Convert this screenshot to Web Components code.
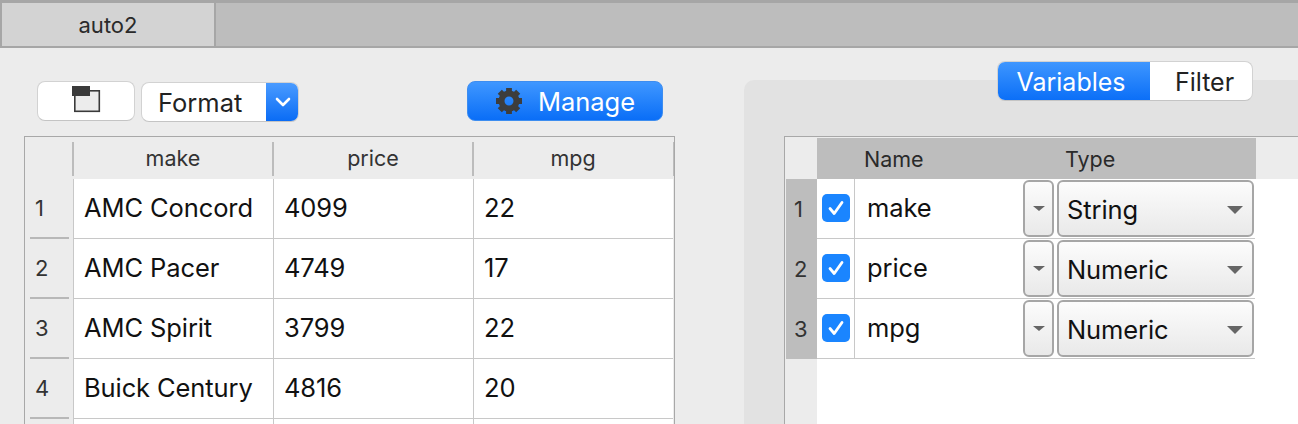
<!doctype html>
<html>
<head>
<meta charset="utf-8">
<style>
  html, body { margin: 0; height: 100%; overflow: hidden; background: #ececec; }
  body { font-family: Inter, "Liberation Sans", sans-serif; color: #1d1d1d; }
  .main { display: flex; height: 376px; overflow: hidden; }
</style>
</head>
<body>
<app-tabbar label="auto2"></app-tabbar>
<div class="main">
  <data-pane>
    <data-grid></data-grid>
  </data-pane>
  <var-pane>
    <var-row num="1" name="make" type="String"></var-row>
    <var-row num="2" name="price" type="Numeric"></var-row>
    <var-row num="3" name="mpg" type="Numeric"></var-row>
  </var-pane>
</div>
<script>
const define = (tag, html) => {
  customElements.define(tag, class extends HTMLElement {
    connectedCallback() {
      if (this.shadowRoot) return;
      const root = this.attachShadow({ mode: "open" });
      root.innerHTML = typeof html === "function" ? html(this) : html;
    }
  });
};

define("app-tabbar", el => `
<style>
  :host { display: flex; height: 48px; box-sizing: border-box; background: #bdbdbd;
    border-top: 3px solid #a6a6a6; border-bottom: 2px solid #a6a6a6; border-left: 2px solid #a6a6a6; }
  .tab { width: 214px; box-sizing: border-box; background: #d3d3d3; border-right: 2px solid #a6a6a6;
    display: flex; align-items: center; justify-content: center; font-size: 22px; color: #2a2a2a; }
</style>
<div class="tab">${el.getAttribute("label")}</div>`);

define("data-pane", `
<style>
  :host { display: block; width: 675px; flex: none; padding-left: 24px; box-sizing: border-box; }
  .bar { display: flex; height: 88px; box-sizing: border-box; padding: 33px 0 0 13px; align-items: flex-start; }
  .btn { box-sizing: border-box; height: 40px; border-radius: 8px; background: #fff;
    border: 1px solid #d2d2d2; border-bottom-color: #c4c4c4; }
  .layout { width: 98px; display: flex; justify-content: center; }
  .format { width: 158px; margin: 1px 0 0 6px; display: flex; overflow: hidden; font-size: 25.500px; color: #222; }
  .format span { flex: 1; padding-left: 16px; line-height: 40px; }
  .chev { width: 33px; margin-right: -1px; background: linear-gradient(#4a9bff, #0a6cf5); display: flex; align-items: center; justify-content: center; }
  .manage { width: 196px; margin-left: 168px; display: flex; align-items: center; justify-content: center; gap: 15px;
    background: linear-gradient(#3f97ff, #0a6ef7); border-color: #3d8df0; color: #fff; font-size: 25.500px; }
</style>
<div class="bar">
  <div class="btn layout">
    <svg width="30" height="30" viewBox="0 0 30 30" style="margin-top:3px"><rect x="3.800" y="5.800" width="24.500" height="20.500" fill="#ececec" stroke="#3a3a3a" stroke-width="1.600"/><rect x="1" y="1" width="18" height="10" fill="#3a3a3a"/></svg>
  </div>
  <div class="btn format"><span>Format</span>
    <div class="chev"><svg width="16" height="10" viewBox="0 0 16 10"><path d="M2 2l6 6 6-6" fill="none" stroke="#fff" stroke-width="2.600" stroke-linecap="round" stroke-linejoin="round"/></svg></div>
  </div>
  <div class="btn manage">
    <svg width="28" height="28" viewBox="0 0 28 28"><g stroke="#3d3d3d" stroke-width="5.800">
      <path d="M14 1v5M14 22v5M1 14h5M22 14h5M4.800 4.800l3.500 3.500M19.700 19.700l3.500 3.500M23.200 4.800l-3.500 3.500M8.300 19.700l-3.500 3.500"/></g>
      <circle cx="14" cy="14" r="7.500" fill="none" stroke="#3d3d3d" stroke-width="6"/></svg>
    <span>Manage</span>
  </div>
</div>
<slot></slot>`);

define("data-grid", () => {
  const rows = [["AMC Concord", 4099, 22], ["AMC Pacer", 4749, 17], ["AMC Spirit", 3799, 22], ["Buick Century", 4816, 20], ["", "", ""]];
  return `
<style>
  :host { display: block; box-sizing: border-box; border-top: 1px solid #a8a8a8; border-left: 1px solid #a8a8a8; border-right: 1px solid #a8a8a8; height: 290px; overflow: hidden; }
  .row { display: grid; grid-template-columns: 48px 200px 200px 200px; }
  .head { height: 42px; background: #ececec; font-size: 21.500px; color: #333; }
  .head div { display: flex; align-items: center; justify-content: center; position: relative; }
  .head div::before { content: ""; position: absolute; left: -1px; top: 5px; bottom: 3px; width: 2px; background: #bcbcbc; }
  .head div:first-child::before { display: none; }
  .head .end::after { content: ""; position: absolute; right: -2px; top: 5px; bottom: 3px; width: 2px; background: #bcbcbc; }
  .cell { height: 60px; box-sizing: border-box; background: #fff; border-bottom: 1px solid #c8c8c8; border-left: 1px solid #c8c8c8;
    display: flex; align-items: center; padding: 0 0 3px 10px; font-size: 25.500px; letter-spacing: -0.100px; color: #111; }
  .num { height: 60px; box-sizing: border-box; background: #ececec; position: relative; display: flex; align-items: center;
    padding: 0 0 3px 10px; font-size: 22px; color: #333; }
  .num::after { content: ""; position: absolute; left: 5px; right: 4px; bottom: 0; height: 2px; background: #b8b8b8; }
</style>
<div class="row head"><div></div><div>make</div><div>price</div><div class="end">mpg</div></div>
${rows.map((r, i) => `<div class="row"><div class="num">${r[0] ? i + 1 : ""}</div>${r.map(c => `<div class="cell">${c}</div>`).join("")}</div>`).join("")}`;
});

define("var-pane", `
<style>
  :host { display: block; flex: 1; margin: 32px 0 0 69px; background: #e2e2e2; border-radius: 10px 0 0 0; position: relative; }
  .seg { position: absolute; left: 253px; top: -19px; width: 256px; height: 40px; box-sizing: border-box; display: flex; border-radius: 8px; overflow: hidden;
    border: 1px solid #d2d2d2; border-bottom-color: #c4c4c4; font-size: 25px; background: #fff; }
  .on { width: 153px; margin: -1px 0 -1px -1px; padding: 1px 5px 0 0; box-sizing: border-box; background: linear-gradient(#3f97ff, #0a6ef7); color: #fff; display: flex; align-items: center; justify-content: center; }
  .off { flex: 1; color: #222; display: flex; align-items: center; justify-content: center; padding: 1px 0 0 7px; }
  .table { position: absolute; left: 40px; right: 0; top: 56px; bottom: 0; background: #fff; border-top: 1px solid #a8a8a8; border-left: 1px solid #a8a8a8; }
  .gutter { position: absolute; left: 0; top: 0; bottom: 0; width: 32px; background: #ececec; }
  .head { position: relative; height: 42px; box-sizing: border-box; background: #ececec; padding-top: 1px; }
  .band { margin-left: 32px; width: 439px; height: 41px; background: #bdbdbd; display: flex; align-items: center; font-size: 21.500px; color: #2a2a2a; }
  .band span:first-child { margin-left: 47px; width: 201px; }
  .rows { position: relative; width: 470px; }
</style>
<div class="seg"><div class="on">Variables</div><div class="off">Filter</div></div>
<div class="table">
  <div class="gutter"></div>
  <div class="head"><div class="band"><span>Name</span><span>Type</span></div></div>
  <div class="rows"><slot></slot></div>
</div>`);

define("var-row", el => `
<style>
  :host { display: grid; grid-template-columns: 32px 37px 168px 34px 199px; height: 60px; }
  .num { background: #bdbdbd; display: flex; align-items: center; padding-left: 8px; font-size: 22px; color: #333; margin-left: 1px; }
  .chk, .name, .drop { box-sizing: border-box; border-bottom: 1px solid #c8c8c8; background: #fff; display: flex; align-items: center; }
  .chk { justify-content: center; padding: 0 0 2px 1px; }
  .box { width: 28px; height: 28px; border-radius: 5px; background: #1a85ff; display: flex; align-items: center; justify-content: center; }
  .name { border-left: 1px solid #c8c8c8; padding: 0 0 2px 12px; font-size: 25.500px; letter-spacing: -0.100px; color: #111; }
  .drop { padding: 0 1px; }
  .drop.s { padding-right: 2px; }
  .pick { flex: 1; height: 57px; box-sizing: border-box; border: 2px solid #a6a6a6; border-radius: 6px; background: linear-gradient(#fcfcfc, #e9e9e9);
    display: flex; align-items: center; justify-content: space-between; font-size: 25.500px; letter-spacing: -0.100px; color: #111; }
  .pick.small { justify-content: center; }
  .pick.big { padding: 2px 9px 0 8px; }
  .caret { width: 0; height: 0; border: solid transparent; border-top-color: #666; }
  .small .caret { border-width: 5px 6px 0; }
  .big .caret { border-width: 8px 8px 0; }
</style>
<div class="num">${el.getAttribute("num")}</div>
<div class="chk"><div class="box"><svg width="20" height="20" viewBox="0 0 20 20"><path d="M4 10.500l4.200 5L16 4.500" fill="none" stroke="#fff" stroke-width="2.800" stroke-linecap="round" stroke-linejoin="round"/></svg></div></div>
<div class="name">${el.getAttribute("name")}</div>
<div class="drop s"><div class="pick small"><i class="caret"></i></div></div>
<div class="drop"><div class="pick big"><span>${el.getAttribute("type")}</span><i class="caret"></i></div></div>`);
</script>
</body>
</html>
